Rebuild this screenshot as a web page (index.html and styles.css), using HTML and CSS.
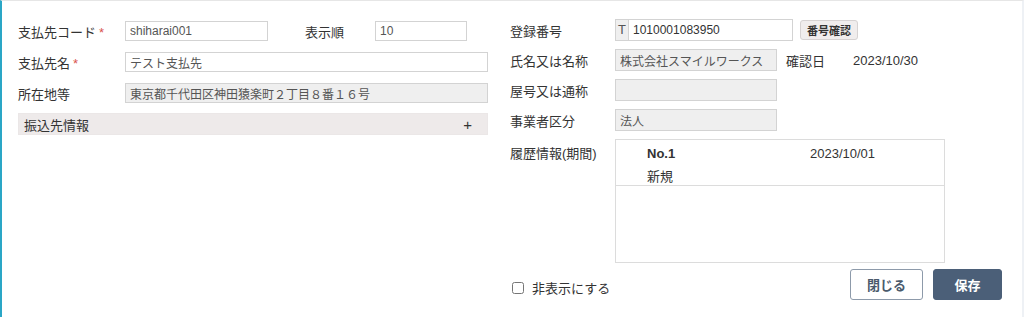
FILE: index.html
```html
<!DOCTYPE html>
<html lang="ja">
<head>
    <meta charset="UTF-8">
    <meta name="viewport" content="width=device-width, initial-scale=1.0">
    <title>支払先</title>
    <link rel="stylesheet" href="styles.css">
</head>
<body>
    <div class="page">
        <div class="col_left">
            <div class="row">
                <label>支払先コード<span class="req">*</span></label>
                <input class="w_code" type="text" value="shiharai001">
                <label class="lbl_order">表示順</label>
                <input class="w_order" type="text" value="10">
            </div>
            <div class="row">
                <label>支払先名<span class="req">*</span></label>
                <input class="w_full" type="text" value="テスト支払先">
            </div>
            <div class="row">
                <label>所在地等</label>
                <input class="w_full readonly" type="text" value="東京都千代田区神田猿楽町２丁目８番１６号" readonly>
            </div>
            <div class="accordion">
                <span>振込先情報</span>
                <span class="plus">+</span>
            </div>
        </div>

        <div class="col_right">
            <div class="row_r">
                <label>登録番号</label>
                <div class="invoice">
                    <span class="prefix">T</span>
                    <input type="text" value="1010001083950">
                </div>
                <button class="btn_check">番号確認</button>
            </div>
            <div class="row_r">
                <label>氏名又は名称</label>
                <input class="w_mid readonly" type="text" value="株式会社スマイルワークス" readonly>
                <span class="confirm_lbl">確認日</span>
                <span class="confirm_date">2023/10/30</span>
            </div>
            <div class="row_r">
                <label>屋号又は通称</label>
                <input class="w_mid readonly" type="text" value="" readonly>
            </div>
            <div class="row_r">
                <label>事業者区分</label>
                <input class="w_mid readonly" type="text" value="法人" readonly>
            </div>
            <div class="row_hist">
                <label>履歴情報(期間)</label>
                <div class="history">
                    <div class="hist_item">
                        <div class="hist_line">
                            <span class="hist_no">No.1</span>
                            <span class="hist_date">2023/10/01</span>
                        </div>
                        <div class="hist_line">新規</div>
                    </div>
                </div>
            </div>
            <div class="footer">
                <label class="chk"><input type="checkbox"> 非表示にする</label>
                <div class="btns">
                    <button class="btn_close">閉じる</button>
                    <button class="btn_save">保存</button>
                </div>
            </div>
        </div>
    </div>
</body>
</html>
```

FILE: styles.css
```css
* {
    margin: 0;
    padding: 0;
    box-sizing: border-box;
}
body {
    font-family: "Liberation Sans", "Noto Sans CJK JP", sans-serif;
    font-size: 13px;
    color: #333;
    background: #fff;
}
.page {
    display: flex;
    height: 317px;
    border-left: 2px solid #2aa6c6;
    border-top: 1px solid #e6e6e6;
    border-right: 2px solid #eef1f5;
}
input {
    font-family: inherit;
    font-size: 12px;
    color: #555;
    height: 20px;
    padding: 0 4px;
    border: 1px solid #d3d3d3;
    outline: none;
    background: #fff;
}
input.readonly {
    background: #efefef;
}
button {
    font-family: inherit;
    cursor: pointer;
}

/* left */
.col_left {
    width: 486px;
    padding: 20px 0 0 16px;
}
.row {
    display: flex;
    align-items: center;
    height: 20px;
    margin-bottom: 11px;
}
.row label {
    width: 107px;
    flex-shrink: 0;
}
.req {
    color: #d9534f;
    margin-left: 3px;
}
.w_code {
    width: 143px;
}
.lbl_order {
    margin-left: 37px;
    width: 70px !important;
}
.w_order {
    width: 92px;
}
.w_full {
    width: 363px;
}
.accordion {
    display: flex;
    justify-content: space-between;
    align-items: center;
    width: 470px;
    height: 22px;
    margin-top: -1px;
    padding: 0 15px 0 5px;
    background: #eeeaea;
    border: 1px solid #ebe7e7;
    font-size: 13px;
}
.plus {
    font-size: 15px;
}

/* right */
.col_right {
    width: 492px;
    margin-left: 22px;
    padding-top: 18px;
}
.row_r {
    display: flex;
    align-items: center;
    height: 22px;
    margin-bottom: 8px;
}
.row_r label, .row_hist label {
    width: 105px;
    flex-shrink: 0;
}
.invoice {
    display: flex;
    width: 178px;
    height: 22px;
    border: 1px solid #d3d3d3;
}
.prefix {
    width: 23px;
    text-align: center;
    background: #efefef;
    border-right: 1px solid #d3d3d3;
    line-height: 20px;
    color: #555;
}
.invoice input {
    flex: 1;
    border: none;
    height: 20px;
    color: #333;
}
.btn_check {
    margin-left: 7px;
    width: 58px;
    height: 20px;
    font-size: 11px;
    font-weight: 700;
    color: #333;
    background: #f0eded;
    border: 1px solid #d6d2d2;
    border-radius: 3px;
}
.w_mid {
    width: 162px;
    height: 22px;
}
.confirm_lbl {
    margin-left: 9px;
}
.confirm_date {
    margin-left: 28px;
    font-size: 13px;
}
.row_hist {
    display: flex;
    align-items: flex-start;
    margin-top: 3px;
}
.row_hist label {
    padding-top: 4px;
}
.history {
    width: 330px;
    height: 124px;
    border: 1px solid #dcdcdc;
}
.hist_item {
    height: 46px;
    border-bottom: 1px solid #dcdcdc;
    padding: 3px 0 0 31px;
}
.hist_line {
    display: flex;
    height: 20px;
    align-items: center;
    margin-bottom: 2px;
}
.hist_no {
    width: 163px;
    font-weight: 700;
}
.hist_date {
    font-size: 13px;
}
.footer {
    display: flex;
    justify-content: space-between;
    align-items: center;
    margin-top: 6px;
}
.chk {
    display: flex;
    align-items: center;
    gap: 8px;
    margin-top: 6px;
    margin-left: 2px;
}
.chk input {
    width: 12px;
    height: 12px;
}
.btns {
    display: flex;
    gap: 10px;
}
.btn_close, .btn_save {
    height: 31px;
    font-size: 13px;
    font-weight: 700;
    border-radius: 3px;
}
.btn_close {
    width: 73px;
    color: #4a5a6c;
    background: #fff;
    border: 1px solid #8d9aaa;
}
.btn_save {
    width: 69px;
    color: #fff;
    background: #4b5f78;
    border: 1px solid #4b5f78;
}
```
